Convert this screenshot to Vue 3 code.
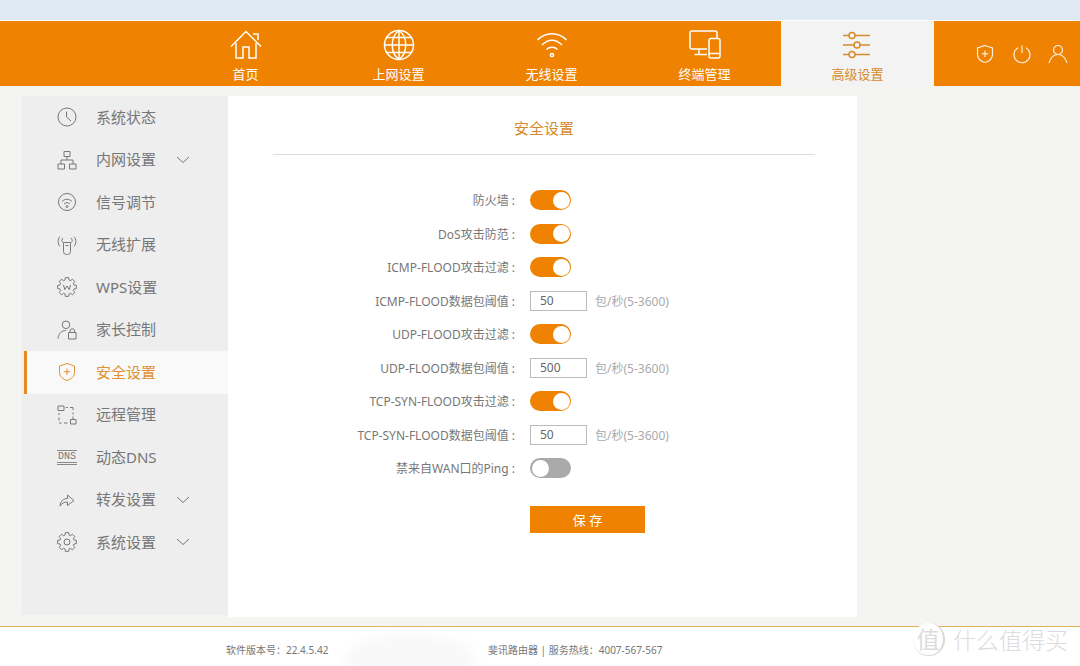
<template>
  <div class="page">
    <div class="top-strip"></div>

    <!-- header nav -->
    <header class="header">
      <div class="nav">
        <div v-for="n in navItems" :key="n.label" class="nav-item" :class="{ active: n.active }">
          <svg class="nav-icon" viewBox="0 0 32 32"><path v-for="d in n.paths" :key="d" :d="d" /></svg>
          <span>{{ n.label }}</span>
        </div>
      </div>
      <div class="header-tools">
        <svg v-for="(t, i) in toolIcons" :key="i" class="tool-icon" viewBox="0 0 20 20"><path v-for="d in t" :key="d" :d="d" /></svg>
      </div>
    </header>

    <div class="content">
      <!-- side menu -->
      <aside class="sidebar">
        <div v-for="m in menuItems" :key="m.label" class="menu-item" :class="{ active: m.active }">
          <span v-if="m.dns" class="dns-icon">DNS</span>
          <svg v-else class="menu-icon" viewBox="0 0 20 20"><path v-for="d in m.paths" :key="d" :d="d" /></svg>
          <span class="menu-label">{{ m.label }}</span>
          <svg v-if="m.more" class="chevron" viewBox="0 0 14 8"><path d="M1 1l6 5.500L13 1" /></svg>
        </div>
      </aside>

      <!-- security form -->
      <main class="panel">
        <h1 class="panel-title">安全设置</h1>
        <div class="form">
          <div v-for="row in rows" :key="row.label" class="form-row">
            <label class="form-label">{{ row.label }} :</label>
            <template v-if="row.type === 'switch'">
              <span class="switch" :class="{ on: row.value }" @click="row.value = !row.value"><i></i></span>
            </template>
            <template v-else>
              <input v-model="row.value" class="num-input" type="text" />
              <span class="hint">包/秒(5-3600)</span>
            </template>
          </div>
          <button class="save-btn">保 存</button>
        </div>
      </main>
    </div>

    <footer class="footer">
      <span class="version">软件版本号：22.4.5.42</span>
      <span>斐讯路由器 | 服务热线：4007-567-567</span>
      <div class="smudge"></div>
      <div class="watermark">
        <span class="wm-badge">值</span>
        <span class="wm-text">什么值得买</span>
      </div>
    </footer>
  </div>
</template>

<script setup>
import { reactive } from 'vue';

const navItems = [
  { label: '首页', paths: ['M1 17.500L16 2.500l15 15', 'M23 5h5v6', 'M6 14v15h7V18h6v11h7V14'] },
  {
    label: '上网设置',
    paths: [
      'M16 1.500a14.500 14.500 0 1 0 0 29a14.500 14.500 0 1 0 0-29z',
      'M16 1.500C7 8 7 24 16 30.500C25 24 25 8 16 1.500z',
      'M16 1.500v29', 'M1.500 16h29', 'M4 8.500h24', 'M4 23.500h24'
    ]
  },
  {
    label: '无线设置',
    paths: [
      'M1.500 11C9.500 2.500 22.500 2.500 30.500 11',
      'M6 16C12 9.500 20 9.500 26 16',
      'M10.500 20.500C13.500 17.500 18.500 17.500 21.500 20.500',
      'M16 24.500a1.600 1.600 0 1 0 0 3.200a1.600 1.600 0 1 0 0-3.200z'
    ]
  },
  {
    label: '终端管理',
    paths: [
      'M18 20H3a2 2 0 0 1-2-2V4a2 2 0 0 1 2-2h23a2 2 0 0 1 2 2v5',
      'M10 20v5', 'M5.500 25.500H18',
      'M22 9.500h7a2 2 0 0 1 2 2V27a2 2 0 0 1-2 2h-7a2 2 0 0 1-2-2V11.500a2 2 0 0 1 2-2z',
      'M20 24.500h11'
    ]
  },
  {
    label: '高级设置',
    active: true,
    paths: [
      'M1 6.500h6', 'M13 6.500h15', 'M7 6.500a3 3 0 1 0 6 0a3 3 0 1 0-6 0z',
      'M1 16h11', 'M18 16h10', 'M12 16a3 3 0 1 0 6 0a3 3 0 1 0-6 0z',
      'M1 25.500h6', 'M13 25.500h15', 'M7 25.500a3 3 0 1 0 6 0a3 3 0 1 0-6 0z'
    ]
  }
];

const shield = ['M10 1.500l7.500 2.500v6.500c0 4-3.500 6.800-7.500 8c-4-1.200-7.500-4-7.500-8V4z', 'M10 6.500v6.500', 'M6.750 9.750h6.500'];

const toolIcons = [
  shield,
  ['M6 3.800a8 8 0 1 0 8 0', 'M10 1.500v7.500'],
  ['M10 1.500a4.500 4.500 0 1 0 0 9a4.500 4.500 0 1 0 0-9z', 'M1 19c1.500-5 5-8.500 9-8.500s7.500 3.500 9 8.500']
];

// outline of a toothed wheel around the middle of the 20x20 box
function gearPath(teeth, outer, inner) {
  const pts = [];
  const step = (Math.PI * 2) / teeth;
  for (let i = 0; i < teeth; i++) {
    const a = i * step - Math.PI / 2;
    const w = step / 4.5;
    [[inner, a - step / 2 + w * 0.6], [outer, a - w], [outer, a + w], [inner, a + step / 2 - w * 0.6]].forEach(([r, t]) => {
      pts.push(`${(10 + r * Math.cos(t)).toFixed(2)} ${(10 + r * Math.sin(t)).toFixed(2)}`);
    });
  }
  return `M${pts.join('L')}z`;
}

const gear = gearPath(8, 9.5, 7.2);

const menuItems = [
  { label: '系统状态', paths: ['M10 1a9 9 0 1 0 0 18a9 9 0 1 0 0-18z', 'M9.500 4.500V10l4.500 4'] },
  {
    label: '内网设置',
    more: true,
    paths: ['M7 1.500h6v5H7z', 'M1 14h6.500v5H1z', 'M12.500 14H19v5h-6.500z', 'M10 6.500V10', 'M4 14v-4h12v4']
  },
  {
    label: '信号调节',
    paths: [
      'M10 1.500a8.500 8.500 0 1 0 0 17a8.500 8.500 0 1 0 0-17z',
      'M5 9.500c3-3 7-3 10 0', 'M7 12c2-1.800 4-1.800 6 0',
      'M10 13.500a1 1 0 1 0 0 2a1 1 0 1 0 0-2z'
    ]
  },
  {
    label: '无线扩展',
    paths: [
      'M6.500 7.500h7v9a3 3 0 0 1-3 3h-1a3 3 0 0 1-3-3z', 'M8.500 10.500h3',
      'M3 11.500C.5 8.500.5 4.500 3 1.500', 'M17 11.500C19.500 8.500 19.500 4.500 17 1.500',
      'M5.500 7.500C4.500 6.500 4.500 4.500 6 3', 'M14.500 7.500C15.500 6.500 15.500 4.500 14 3'
    ]
  },
  { label: 'WPS设置', paths: [gear, 'M6.500 8l1.300 4.500L10 9l2.200 3.500L13.500 8'] },
  {
    label: '家长控制',
    paths: [
      'M9 1a3.800 3.800 0 1 0 0 7.600a3.800 3.800 0 1 0 0-7.600z', 'M1 18.500c.5-5 3.500-8 8-8',
      'M11.500 12.500h7.500v6.500h-7.500z', 'M13 12.500V11a2.200 2.200 0 0 1 4.500 0v1.500'
    ]
  },
  { label: '安全设置', active: true, paths: shield },
  {
    label: '远程管理',
    paths: [
      'M1 1h6v4.500H1z', 'M13.500 14.500H19V19h-5.500z',
      'M9 2.500h2', 'M13 2.500h3v2.500', 'M16 7.500v2', 'M16 11.500v3', 'M2 8v2', 'M2 12.500v3', 'M2 18h2.500', 'M7 18h3.500'
    ]
  },
  { label: '动态DNS', dns: true },
  { label: '转发设置', more: true, paths: ['M3 16c.5-4.500 3-7.500 7.500-7.500V5l6.500 5.500-6.500 5v-3.500c-3.500 0-5.500 1-7.500 4z'] },
  { label: '系统设置', more: true, paths: [gear, 'M10 7a3 3 0 1 0 0 6a3 3 0 1 0 0-6z'] }
];

// form rows, same order as the page
const rows = reactive([
  { label: '防火墙', type: 'switch', value: true },
  { label: 'DoS攻击防范', type: 'switch', value: true },
  { label: 'ICMP-FLOOD攻击过滤', type: 'switch', value: true },
  { label: 'ICMP-FLOOD数据包阈值', type: 'input', value: '50' },
  { label: 'UDP-FLOOD攻击过滤', type: 'switch', value: true },
  { label: 'UDP-FLOOD数据包阈值', type: 'input', value: '500' },
  { label: 'TCP-SYN-FLOOD攻击过滤', type: 'switch', value: true },
  { label: 'TCP-SYN-FLOOD数据包阈值', type: 'input', value: '50' },
  { label: '禁来自WAN口的Ping', type: 'switch', value: false }
]);
</script>

<style>
html, body { margin: 0; background: #fff; }
</style>

<style scoped>
.page {
  width: 1080px;
  height: 666px;
  overflow: hidden;
  display: flex;
  flex-direction: column;
  background: #f4f4f3;
  font-family: "Noto Sans", "Noto Sans CJK SC", sans-serif;
}

.top-strip {
  height: 20px;
  flex: none;
  background: #dfe9f4;
  border-bottom: 1px solid #fff;
}

.header {
  height: 65px;
  flex: none;
  display: flex;
  background: #ef8200;
  color: #fff;
}

.nav { display: flex; padding-left: 169px; }

.nav-item {
  width: 153px;
  display: flex;
  flex-direction: column;
  align-items: center;
  padding-top: 8px;
  box-sizing: border-box;
  font-size: 13px;
  line-height: 18px;
}

.nav-item span { margin-top: 4px; }

.nav-item.active { background: #f3f3f3; color: #d68a2a; }

.nav-icon {
  width: 32px;
  height: 32px;
  fill: none;
  stroke: currentColor;
  stroke-width: 1.5;
}

.header-tools {
  flex: 1;
  display: flex;
  align-items: center;
  gap: 16.500px;
  padding: 1px 0 0 41px;
}

.tool-icon {
  width: 20px;
  height: 20px;
  fill: none;
  stroke: #fdeede;
  stroke-width: 1.2;
}

.content { flex: 1; display: flex; align-items: flex-start; padding: 10px 0 0 22px; }

.sidebar {
  width: 206px;
  height: 519px;
  background: #eee;
}

.menu-item {
  height: 42.500px;
  margin-left: 2px;
  padding-left: 30px;
  border-left: 3px solid transparent;
  display: flex;
  align-items: center;
  font-size: 15px;
  color: #777;
}

.menu-item.active {
  background: #f9f9f9;
  border-left-color: #e58a22;
  color: #de9231;
}

.menu-icon {
  width: 20px;
  height: 20px;
  flex: none;
  fill: none;
  stroke: currentColor;
  stroke-width: 1;
}

.dns-icon {
  width: 20px;
  flex: none;
  font-size: 10px;
  line-height: 11px;
  text-align: center;
  border-top: 1px solid #888;
  border-bottom: 3px double #888;
  color: #777;
  font-family: "Liberation Mono", monospace;
}

.menu-label { margin-left: 19px; min-width: 60px; padding-bottom: 2px; }

.chevron {
  width: 14px;
  height: 8px;
  margin-left: 20px;
  fill: none;
  stroke: #777;
  stroke-width: 1;
}

.panel {
  width: 629px;
  height: 521px;
  box-sizing: border-box;
  padding: 0 42px 0 45px;
  background: #fff;
}

.panel-title {
  height: 59px;
  margin: 0;
  box-sizing: border-box;
  border-bottom: 1px solid #ddd;
  padding-top: 22px;
  font-size: 15px;
  font-weight: 400;
  line-height: 20px;
  text-align: center;
  color: #d68a2a;
}

.form { padding-top: 35px; display: flex; flex-direction: column; gap: 13.500px; }

.form-row { display: flex; align-items: center; height: 20px; font-size: 12px; color: #777; }

.form-label { width: 242px; margin-right: 15px; text-align: right; flex: none; white-space: nowrap; }

.switch {
  position: relative;
  width: 41px;
  height: 20px;
  border-radius: 10px;
  background: #aaa;
  cursor: pointer;
}

.switch.on { background: #ef8200; }

.switch i {
  position: absolute;
  top: 1.500px;
  left: 1.500px;
  width: 17px;
  height: 17px;
  border-radius: 50%;
  background: #fff;
}

.switch.on i { left: 22.500px; }

.num-input {
  width: 57px;
  height: 20px;
  box-sizing: border-box;
  padding: 0 0 0 9px;
  border: 1px solid #bbb;
  outline: none;
  font: inherit;
  color: #666;
}

.hint { margin-left: 8px; color: #aaa; }

.save-btn {
  width: 115px;
  height: 27px;
  margin: 14.500px 0 0 257px;
  border: none;
  background: #ef8200;
  color: #fff;
  font: inherit;
  font-size: 13px;
  cursor: pointer;
}

.footer {
  position: relative;
  height: 40px;
  flex: none;
  box-sizing: border-box;
  border-top: 1px solid #e2b257;
  padding: 13px 0 0 226px;
  background: #fff;
  font-size: 10px;
  line-height: 20px;
  color: #777;
}

.version { display: inline-block; width: 262px; }

.smudge {
  position: absolute;
  left: 345px;
  top: 8px;
  width: 130px;
  height: 50px;
  border-radius: 50%;
  background: #f8f8f8;
  filter: blur(6px);
}

.watermark {
  position: absolute;
  left: 913px;
  top: -4px;
  display: flex;
  align-items: center;
  gap: 8px;
  color: #dcdcdc;
}

.wm-badge {
  width: 30px;
  height: 32px;
  border-radius: 50%;
  border-right: 2px solid #d8d8d8;
  border-bottom: 1px solid #d8d8d8;
  background: #fff;
  font-size: 23px;
  line-height: 32px;
  text-align: center;
}

.wm-text {
  font-size: 23px;
  font-weight: 300;
  line-height: 32px;
  white-space: nowrap;
}
</style>
